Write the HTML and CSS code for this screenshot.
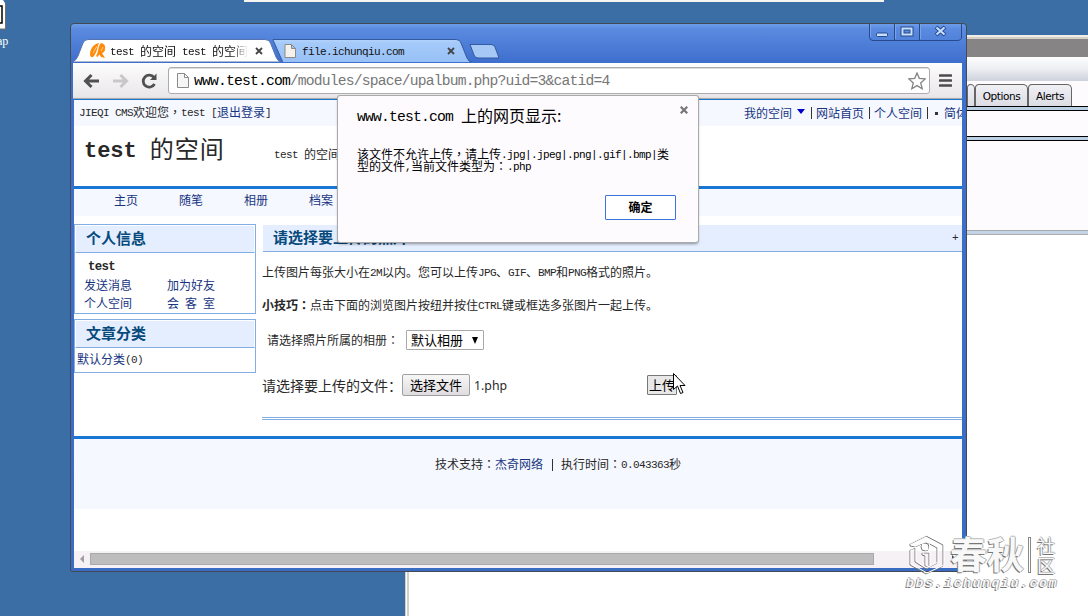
FILE: index.html
```html
<!DOCTYPE html>
<html>
<head>
<meta charset="utf-8">
<title>test 的空间</title>
<link rel="stylesheet" href="styles.css">
</head>
<body>
<div class="desktop">
  <div class="top-strip"></div>
  <div class="shortcut">
    <svg width="7" height="31" viewBox="0 0 7 31"><path d="M0 0h3l2 3v26H0z" fill="#fff"/><path d="M0 6h2v17H0" fill="none" stroke="#000" stroke-width="1.5"/><path d="M5.5 3v26H0" fill="none" stroke="#776f65"/></svg>
    <span>ap</span>
  </div>

  <div class="back-window">
    <div class="back-title"></div>
    <div class="back-tools"></div>
    <div class="back-tabs"><span class="stub"></span><span>Options</span><span>Alerts</span></div>
    <div class="back-rule"></div>
    <div class="back-row"></div>
    <div class="back-rule"></div>
    <div class="back-pane"></div>
    <div class="back-rule soft"></div>
  </div>

  <div class="browser">
    <div class="tabstrip">
      <svg class="tab-shapes" width="892" height="38" viewBox="0 0 892 38">
        <defs><linearGradient id="idle" x2="0" y2="1"><stop stop-color="#b3d3fb"/><stop offset=".15" stop-color="#a5cafa"/><stop offset="1" stop-color="#98c1f6"/></linearGradient></defs>
        <path d="M200 15.500H383Q387 15.500 388 19L394 34Q396 38.500 400 38.500H210L200 16Z" fill="url(#idle)" stroke="#33599f"/>
        <path d="M397 20.500H418Q421 20.500 422 23L426 34H405Q402 34 401 31Z" fill="#a5c8f5" stroke="#33599f"/>
        <path d="M-1 38Q3 37 5 32L10 19Q11.500 15.500 15 15.500H192Q196 15.500 197.500 19L203 33Q205 38 209 38Z" fill="#fff" stroke="#5673ae"/>
      </svg>
      <div class="tab active">
        <svg class="favicon" width="16" height="16" viewBox="0 0 16 16"><path d="M0 12C0 5 4 1 9 0C7 5 7 10 3 14Q1 15 0 12Z" fill="#ff8a0c"/><path d="M6 13C9 9 7 5 11 0Q16 1 15 6Q15 9 12 10L15 15L11 14L9.500 11.500L7.500 14Z" fill="#ff8a0c"/><path d="M3 10L7 3M11 8L13 4" stroke="#ffd08a"/></svg>
        <span class="tab-title"><i>test </i>的空间<i> test </i>的空间</span>
        <svg class="x" width="8" height="8" viewBox="0 0 8 8"><path d="M1 1l6 6M7 1L1 7" stroke="#444" stroke-width="1.800"/></svg>
      </div>
      <div class="tab second">
        <svg class="page-icon" width="12" height="14" viewBox="0 0 12 14"><path d="M1 .5h6.500l4 4V13.500H1zM7.500 .5v4h4" fill="#f5f2ee" stroke="#8c8987"/></svg>
        <span class="tab-title"><i>file.ichunqiu.com</i></span>
        <svg class="x" width="8" height="8" viewBox="0 0 8 8"><path d="M1 1l6 6M7 1L1 7" stroke="#444" stroke-width="1.800"/></svg>
      </div>
      <svg class="controls" width="94" height="17" viewBox="0 0 94 17"><path d="M.5 0V13Q.5 16.500 4 16.500H88Q92.500 16.500 92.500 13V0M25.500 0V16M50.500 0V16" fill="none" stroke="#27498e"/><path d="M1.500 0V13M26.500 0v15M51.500 0v15" stroke="#7ca3e5"/><rect x="7.500" y="9" width="11" height="3.500" rx="1" fill="#c6dffc" stroke="#27498e"/><path d="M33.500 4.500h9v6h-9z" fill="none" stroke="#27498e" stroke-width="4"/><path d="M33.500 4.500h9v6h-9z" fill="none" stroke="#c6dffc" stroke-width="2"/><path d="M67 3l9 8M76 3l-9 8" stroke="#27498e" stroke-width="4"/><path d="M67.500 3.500l8 7M75.500 3.500l-8 7" stroke="#c6dffc" stroke-width="2.200"/></svg>
    </div>
    <div class="toolbar">
      <svg class="nav-icons" width="90" height="18" viewBox="0 0 90 18" fill="none"><path d="M27 9H14M19.500 3L13.500 9l6 6" stroke="#505050" stroke-width="3"/><path d="M41 9H54M48.500 3L54.500 9l-6 6" stroke="#c9c7c9" stroke-width="3"/><path d="M82 5.500A6 6 0 1 0 82.500 12" stroke="#505050" stroke-width="2.800"/><path d="M84.500 1.500V8H78z" fill="#505050"/></svg>
      <div class="omnibox">
        <svg width="12" height="15" viewBox="0 0 12 15"><path d="M.5 .5h7l4 4V14.500H.5zM7.500 .5v4h4" fill="#f7f6f6" stroke="#8c8a8c"/></svg>
        <span class="url"><b>www.test.com</b>/modules/space/upalbum.php?uid=3&amp;catid=4</span>
        <svg class="star" width="18" height="18" viewBox="0 0 18 18"><path d="M9 1l2.300 5.300 5.900.6-4.500 4 1.500 5.800L9 13.600l-5.200 3.100 1.500-5.800-4.500-4 5.900-.6z" fill="#fff" stroke="#858385" stroke-width="1.300"/></svg>
      </div>
      <svg class="menu-icon" width="13" height="13" viewBox="0 0 13 13"><path d="M1 1.500h11M1 6.500h11M1 11.500h11" stroke="#4d4b4d" stroke-width="2.600" stroke-linecap="round"/></svg>
    </div>

    <div class="page">
      <div class="userbar">
        <div><i>JIEQI CMS</i>欢迎您<q>，</q><i>test [</i><a>退出登录</a><i>]</i></div>
        <div class="quick"><a>我的空间</a><svg width="9" height="5" viewBox="0 0 9 5"><path d="M0 0h8L4 5z" fill="#0000cd"/></svg><s></s><a>网站首页</a><s></s><a>个人空间</a><s></s><u></u><a>简体</a></div>
      </div>
      <div class="banner"><h1><i>test </i>的空间</h1><p><i>test </i>的空间</p></div>
      <div class="menu"><a>主页</a><a>随笔</a><a>相册</a><a>档案</a></div>
      <div class="columns">
        <div class="side">
          <div class="box profile">
            <h2>个人信息</h2>
            <b class="who"><i>test</i></b>
            <div class="links"><a>发送消息</a><a>加为好友</a><a>个人空间</a><a class="spread">会客室</a></div>
          </div>
          <div class="box cats"><h2>文章分类</h2><p><a>默认分类</a><i>(0)</i></p></div>
        </div>
        <div class="main">
          <div class="main-head"><h2>请选择要上传的照片<q>：</q></h2><i>+</i></div>
          <p class="hint">上传图片每张大小在<i>2M</i>以内。您可以上传<i>JPG</i>、<i>GIF</i>、<i>BMP</i>和<i>PNG</i>格式的照片。</p>
          <p class="tip"><b>小技巧<q>：</q></b>点击下面的浏览图片按纽并按住<i>CTRL</i>键或框选多张图片一起上传。</p>
          <div class="album-row"><span>请选择照片所属的相册<q>：</q></span><div class="select">默认相册<svg width="6" height="7" viewBox="0 0 6 7"><path d="M0 0h6L3 7z"/></svg></div></div>
          <div class="file-row"><span>请选择要上传的文件：</span><button class="choose">选择文件</button><em>1.php</em><button class="upload">上传</button></div>
          <div class="double"></div>
        </div>
      </div>
      <div class="footer">技术支持<q>：</q><a>杰奇网络</a><s></s>执行时间<q>：</q><i>0.043363</i>秒</div>
      <div class="blank"></div>
      <div class="scrollbar"><svg width="4" height="8" viewBox="0 0 4 8"><path d="M4 0v8L0 4z" fill="#a09ea2"/></svg><div class="thumb"></div><svg class="right" width="4" height="8" viewBox="0 0 4 8"><path d="M0 0v8l4-4z" fill="#444"/></svg></div>
    </div>
  </div>

  <div class="dialog">
    <div class="dialog-title"><span><i>www.test.com </i>上的网页显示:</span><svg width="8" height="8" viewBox="0 0 8 8"><path d="M.7 .7l6.600 6.600M7.300 .7L.7 7.300" stroke="#777" stroke-width="2.200"/></svg></div>
    <p>该文件不允许上传<q>，</q>请上传<i>.jpg|.jpeg|.png|.gif|.bmp|</i>类<br>型的文件<i>,</i>当前文件类型为<q>：</q><i>.php</i></p>
    <button>确定</button>
  </div>

  <svg class="cursor" width="13" height="22" viewBox="0 0 13 22"><path d="M.5 .5V16.500L4.500 13l3 7.500 2.500-1-3-7h5z" fill="#fff" stroke="#000"/></svg>

  <div class="watermark">
    <svg class="mark-logo" width="42" height="44" viewBox="0 0 42 44" fill="none"><g transform="translate(-1 1)" stroke="#777"><path d="M5 13V11L21 3L38 12V33L21 41L5 32V17l5-2v14l11 7 11-6V15L21 9 10 14z"/><circle cx="20" cy="14" r="4"/><path d="M17 20h7v15l-4-2V23l-3-1z"/></g><g stroke="#fff"><path d="M5 13V11L21 3L38 12V33L21 41L5 32V17l5-2v14l11 7 11-6V15L21 9 10 14z"/><circle cx="20" cy="14" r="4"/><path d="M17 20h7v15l-4-2V23l-3-1z"/></g></svg>
    <span class="mark-big">春秋</span><span class="mark-bar"></span><span class="mark-small"><span>社</span><span>区</span></span>
    <span class="mark-url">bbs.ichunqiu.com</span>
  </div>
</div>
</body>
</html>
```
FILE: styles.css
```css
* { box-sizing: border-box; margin: 0; padding: 0; }
body { width: 1088px; height: 616px; overflow: hidden; font: 12px/16px "Noto Sans CJK SC", sans-serif; color: #282828; }
svg { display: block; flex: none; }
a { color: #17357f; }
/* half-width latin runs: exactly half an em of the surrounding text */
i { font-family: "Liberation Mono", monospace; font-style: normal; font-size: .92em; line-height: 0; letter-spacing: -.0565em; vertical-align: 1px; white-space: pre; }
/* centred full-width punctuation */
q { quotes: none; font-family: "Noto Sans CJK TC", sans-serif; line-height: 0; }
q::before, q::after { content: none; }
s { display: inline-block; width: 1px; height: 12px; background: #333; flex: none; }
button { font: inherit; color: #000; white-space: nowrap; }

.desktop { position: relative; width: 1088px; height: 616px; overflow: hidden; background: #3a6ea5; }
.top-strip { position: absolute; left: 244px; top: 0; width: 640px; height: 2px; background: #f6f4f1; }
.shortcut { position: absolute; left: 0; top: 0; color: #fff; font: 12px/14px "Liberation Serif", serif; }
.shortcut span { display: block; margin: 3px 0 0 -3px; }

/* window behind the browser */
.back-window { position: absolute; left: 405px; top: 35px; width: 700px; height: 600px; background: #fff; border-left: 1px solid #d4d0c8; border-top: 2px solid #f0ede8; box-shadow: inset 1px 0 #fff, inset 3px 0 #d4d0c8; }
.back-title { height: 20px; border-top: 2px solid #d4d0c8; background: #868484; }
.back-tools { height: 24px; background: linear-gradient(#fdfdfe, #eef0f4 45%, #cdd2dc); }
.back-tabs { height: 25px; padding: 3px 0 0 561px; display: flex; background: #fefbff; font: 10.500px/22px "DejaVu Sans", sans-serif; letter-spacing: -.4px; color: #000; }
.back-tabs > span { width: 53px; text-align: center; border: 1px solid #666; border-bottom: 0; border-radius: 4px 5px 0 0; background: linear-gradient(#f0f0f5, #dcdde4); }
.back-tabs > span.stub { width: 8px; }
.back-tabs > span:last-child { width: 44px; }
.back-rule { height: 5px; background: #b9cfe3; border: solid #000; border-width: 1px 0; }
.back-rule.soft { border-color: #aaa; background: #c2d4e6; }
.back-row { height: 25px; background: #fefbff; }
.back-pane { height: 89px; background: #fefbff; }

.browser { position: absolute; left: 70px; top: 23px; width: 897px; height: 549px; display: flex; flex-direction: column; border: 1px solid #444a55; border-radius: 4px 4px 2px 2px; padding: 0 4px 3px 2px; background: linear-gradient(#6d9ce8, #5a8be0 5px, #3f6fcd 38px, #3a6cc4); }
.tabstrip { position: relative; height: 39px; display: flex; flex: none; font-size: 12px; color: #111; }
.tab-shapes { position: absolute; left: 0; top: 0; }
.tab { position: relative; display: flex; align-items: center; padding-top: 14px; }
.active { width: 200px; padding-left: 17px; }
.tab-title { white-space: nowrap; overflow: hidden; }
.active .tab-title { width: 138px; margin-left: 4px; -webkit-mask-image: linear-gradient(90deg, #000 88%, transparent); mask-image: linear-gradient(90deg, #000 88%, transparent); }
.active .x { margin-left: 7px; }
.second { width: 190px; padding-left: 11px; }
.second .tab-title { margin-left: 6px; width: 139px; }
.second .x { margin-left: 6px; }
.controls { position: absolute; left: 796px; top: 0; }
.toolbar { height: 36px; flex: none; display: flex; align-items: center; background: linear-gradient(#fefdfd, #e9e7ea 33px, #e2e2e2); border-bottom: 1px solid #a9a8aa; }
.nav-icons { margin-left: -1px; }
.omnibox { width: 762px; height: 27px; margin-left: 6px; display: flex; align-items: center; padding: 0 3px 0 8px; background: #fff; border: 1px solid #adabad; border-radius: 3px; box-shadow: inset 0 1px #ddd; }
.url { font: 14.700px/24px "Liberation Mono", monospace; letter-spacing: -.825px; color: #777; margin: 1px 0 0 5px; white-space: pre; }
.url b { font-weight: normal; color: #000; }
.star { margin-left: auto; }
.menu-icon { margin-left: 9px; }

.page { height: 469px; margin: 0 0 0 1px; overflow: hidden; display: flex; flex-direction: column; background: #fff; border-top: 1px solid #1976d2; }
.page > * { flex: none; }
.userbar { height: 26px; display: flex; align-items: center; justify-content: space-between; padding: 0 0 2px 5px; background: #f6f8ff; white-space: nowrap; }
.quick { display: flex; align-items: center; width: 218px; padding-top: 2px; }
.quick svg { margin: 0 5px 3px 5px; }
.quick s { margin: 0 4px 0 5px; }
.quick svg + s { margin-left: 0; }
.quick u { width: 3px; height: 3px; margin: 0 6px 0 3px; background: #333; flex: none; }
.quick a { flex: none; }
.banner { height: 60px; display: flex; padding-left: 10px; }
.banner h1 { font-size: 24px; line-height: 44px; font-weight: 400; letter-spacing: 1px; width: 190px; white-space: nowrap; }
.banner h1 i { font-weight: bold; letter-spacing: -.1px; }
.banner p { padding-top: 20px; }
.menu { height: 30px; border-top: 3px solid #1976d2; background: #f6f8ff; padding: 3px 0 0 40px; display: flex; gap: 41px; }
.columns { height: 220px; padding-top: 8px; display: flex; gap: 6px; }
.side { width: 182px; }
.box { border: 1px solid #82aee5; margin-bottom: 5px; }
.box h2 { height: 28px; border: 1px solid #fff; border-bottom: 1px solid #82aee5; background: #e5eeff; padding-left: 10px; font-size: 15px; line-height: 24px; color: #074a7c; }
.profile { height: 90px; }
.who { display: block; line-height: 16px; margin: 4px 0 3px 13px; font-size: 13.500px; }
.links { display: grid; grid-template-columns: 83px 60px; line-height: 18px; padding-left: 9px; }
.spread { letter-spacing: 6px; }
.cats { height: 54px; }
.cats p { padding: 3px 2px; }
.main { width: 700px; padding-top: 1px; }
.main-head { height: 27px; margin-left: 1px; display: flex; justify-content: space-between; align-items: center; border-bottom: 1px solid #82aee5; background: #e5eeff; padding: 0 4px 0 10px; }
.main-head h2 { font-size: 15px; line-height: 22px; padding-bottom: 3px; color: #074a7c; }
.hint { padding-top: 12px; }
.tip { padding-top: 17px; }
.album-row { height: 20px; margin-top: 17px; padding-left: 5px; display: flex; align-items: center; }
.album-row span { width: 139px; }
.select { width: 78px; height: 20px; border: 1px solid #a9a9a9; border-radius: 1px; padding: 0 5px 0 4px; display: flex; align-items: center; justify-content: space-between; font-size: 13px; color: #000; background: #fff; }
.file-row { height: 24px; margin-top: 23px; display: flex; align-items: center; font-size: 14px; }
.file-row span { width: 140px; }
.choose { width: 68px; height: 22px; font-size: 13px; line-height: 18px; border: 1px solid #a0a0a0; border-radius: 2px; background: linear-gradient(#f8f7f8, #dedcde); }
.file-row em { font: 12.300px "Noto Sans", sans-serif; width: 173px; padding-left: 4px; }
.upload { width: 30px; height: 20px; margin-left: 4px; font-size: 13px; line-height: 16px; border: 1px solid #777; border-radius: 1px; background: #e8e8e8; }
.double { height: 3px; margin-top: 20px; border: solid #82aee5; border-width: 1px 0; }
.footer { height: 73px; border-top: 3px solid #1976d2; background: #f6f8ff; padding: 17px 0 0 361px; white-space: nowrap; }
.footer s { margin: 0 8px 0 9px; vertical-align: -2px; }
.blank { height: 42px; }
.scrollbar { height: 17px; padding: 0 0 1px 6px; display: flex; align-items: center; background: #f5f1f5; }
.thumb { width: 784px; height: 12px; margin-left: 6px; background: #bdbdbd; border: 1px solid #a9a9a9; }
.right { margin-left: 78px; }

.dialog { position: absolute; left: 338px; top: 96px; width: 360px; height: 146px; padding: 10px 10px 0 19px; border-radius: 2px; background: #fefbff; box-shadow: 0 0 0 1px #aaa, 0 2px 3px #0006; color: #000; display: flex; flex-direction: column; }
.dialog-title { height: 20px; display: flex; justify-content: space-between; font-size: 16px; line-height: 18px; }
.dialog p { margin-top: 22px; line-height: 12px; white-space: nowrap; }
.dialog button { width: 71px; height: 25px; margin: 23px 12px 0 0; padding-bottom: 2px; align-self: flex-end; font-weight: bold; line-height: 20px; background: #fff; border: 1px solid #3b73df; border-radius: 1px; }

.cursor { position: absolute; left: 673px; top: 373px; }
.watermark { position: absolute; left: 906px; top: 532px; width: 160px; height: 62px; color: #f8f8f8; text-shadow: -1px 1px #777, 1px 0 #aaa, 0 -1px #bbb; display: grid; grid-template: 44px 16px / 44px 78px 6px 30px; }
.mark-big { font-size: 37px; line-height: 42px; font-weight: bold; white-space: nowrap; }
.mark-bar { width: 3px; height: 36px; margin-top: 5px; border: 1px solid #888; background: #fff; }
.mark-small { display: grid; grid-template-rows: 20px 20px; font-size: 18px; line-height: 20px; padding: 3px 0 0 3px; }
.mark-url { grid-column: 1 / -1; font: italic bold 13px/14px "Liberation Mono", monospace; letter-spacing: 1.700px; padding-top: 1px; }
```
